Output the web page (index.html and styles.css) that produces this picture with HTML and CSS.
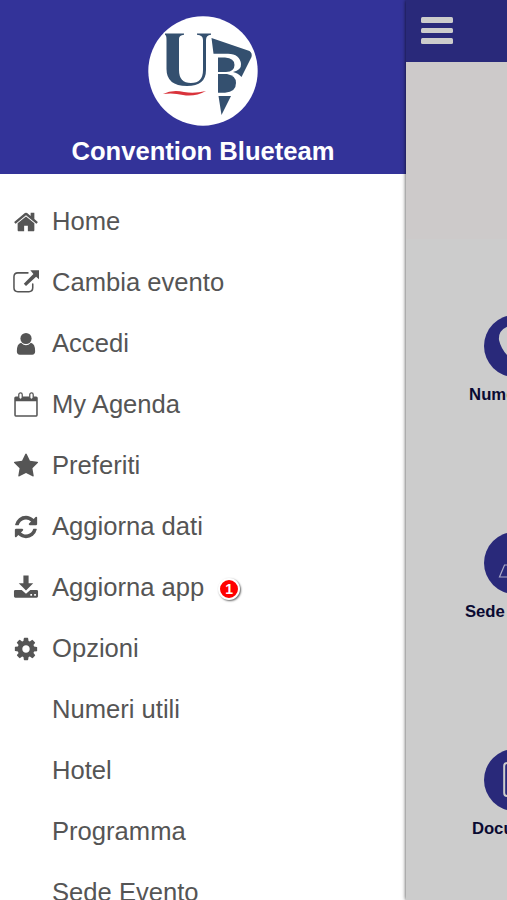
FILE: index.html
```html
<!DOCTYPE html>
<html lang="it">
<head>
    <meta charset="UTF-8">
    <meta name="viewport" content="width=device-width, initial-scale=1.0">
    <title>Convention Blueteam</title>
    <link rel="stylesheet" href="styles.css">
</head>
<body>
    <div class="app">
        <aside class="sidebar">
            <header class="sidebar-header">
                <svg class="logo" viewBox="0 0 110 110">
                    <circle cx="55" cy="55" r="54.7" fill="#fff"/>
                    <g fill="#34506f">
                        <path d="M17 17.500H36V18.700Q31 19 31 23V54Q31 67 43 67Q55 67 55 54V24Q55 19 49 18.700V17.500H63V18.700Q58 19 58 24V54Q58 70 39 70Q18.500 70 18.500 53V24Q18.500 19 17 18.700Z"/>
                        <path d="M63.500 22L101.500 35Q104.500 37 103.500 41L93.500 61Q90 57 85 56Q93.500 54 93 48Q92 38 80 37.700H65.500Z"/>
                        <path d="M70 41.500H77Q86.500 42 86.500 49Q86.500 55.500 78 56H70Z"/>
                        <path d="M70 58H79Q88 59.500 88 67Q88 76 77 76.700H70Z"/>
                        <path d="M70.500 80H83L73.500 99Z"/>
                    </g>
                    <path d="M15 78Q24 73.500 36 76Q46 78 58 75Q47 81 35 79Q25 76.500 15 78Z" fill="#d9333b"/>
                </svg>
                <h1>Convention Blueteam</h1>
            </header>
            <ul class="menu">
                <li>
                    <svg class="icon" viewBox="0 0 1792 1792"><path d="M1472 992v480q0 26-19 45t-45 19h-384v-384h-256v384h-384q-26 0-45-19t-19-45v-480q0-1 .5-3t.5-3l575-474 575 474q1 2 1 6zm223-69l-62 74q-8 9-21 11h-3q-13 0-21-7l-692-577-692 577q-12 8-24 7-13-2-21-11l-62-74q-8-10-7-23.500t11-21.500l719-599q32-26 76-26t76 26l244 204v-195q0-14 9-23t23-9h192q14 0 23 9t9 23v408l219 182q10 8 11 21.500t-7 23.500z"/></svg>
                    <span>Home</span>
                </li>
                <li>
                    <svg class="icon" viewBox="0 0 27 27"><path d="M15.500 3H5Q1 3 1 7V18.500Q1 22.500 5 22.500H16.500Q20.500 22.500 20.500 18.500V14.500" fill="none" stroke="#555" stroke-width="1.600" stroke-linecap="round"/><path d="M18 0.200H27V9.500L24 7L13.500 16.500L11.200 14.200L21.200 4.200Z"/></svg>
                    <span>Cambia evento</span>
                </li>
                <li>
                    <svg class="icon" viewBox="0 0 27 27"><circle cx="13.500" cy="7.800" r="5.800"/><path d="M8.400 12.200Q13.500 17.400 18.600 12.200Q23 13.200 23 21Q23 24.600 19.800 24.600H7.200Q4 24.600 4 21Q4 13.200 8.400 12.200Z"/></svg>
                    <span>Accedi</span>
                </li>
                <li>
                    <svg class="icon" viewBox="0 0 27 27"><path d="M2.900 4.600H24.100Q25.700 4.600 25.700 6.200V24Q25.700 25.700 24.100 25.700H2.900Q1.300 25.700 1.300 24V6.200Q1.300 4.600 2.900 4.600ZM2.900 9.500V24.200H24.100V9.500Z" fill-rule="evenodd"/><rect x="6" y="1" width="3.600" height="6.600" rx="1.800" fill="#fff" stroke="#555" stroke-width="1.300"/><rect x="17.400" y="1" width="3.600" height="6.600" rx="1.800" fill="#fff" stroke="#555" stroke-width="1.300"/></svg>
                    <span>My Agenda</span>
                </li>
                <li>
                    <svg class="icon" viewBox="0 0 1792 1792"><path d="M1728 647q0 22-26 48l-363 354 86 500q1 7 1 20 0 21-10.500 35.500t-30.500 14.500q-19 0-40-12l-449-236-449 236q-22 12-40 12-21 0-31.500-14.500t-10.500-35.500q0-6 2-20l86-500-364-354q-25-27-25-48 0-37 56-46l502-73 225-455q19-41 49-41t49 41l225 455 502 73q56 9 56 46z"/></svg>
                    <span>Preferiti</span>
                </li>
                <li>
                    <svg class="icon" viewBox="0 0 1792 1792"><path d="M1639 1056q0 5-1 7-64 268-268 434.500t-478 166.500q-146 0-282.500-55t-243.500-157l-129 129q-19 19-45 19t-45-19-19-45v-448q0-26 19-45t45-19h448q26 0 45 19t19 45-19 45l-137 137q71 66 161 102t187 36q134 0 250-65t186-179q11-17 53-117 8-23 30-23h192q13 0 22.500 9.500t9.500 22.500zm25-800v448q0 26-19 45t-45 19h-448q-26 0-45-19t-19-45 19-45l138-138q-148-137-349-137-134 0-250 65t-186 179q-11 17-53 117-8 23-30 23h-199q-13 0-22.500-9.500t-9.500-22.500v-7q65-268 270-434.500t480-166.500q146 0 284 55.500t245 156.500l130-129q19-19 45-19t45 19 19 45z"/></svg>
                    <span>Aggiorna dati</span>
                </li>
                <li>
                    <svg class="icon" viewBox="0 0 27 27"><path d="M10.800 0.500H16.200V8.500H21L13.500 16L6 8.500H10.800Z"/><path d="M2.500 15.500H9L13.500 19.500L18 15.500H24.500Q26 15.500 26 17V22Q26 23.500 24.500 23.500H2.500Q1 23.500 1 22V17Q1 15.500 2.500 15.500ZM18 19.800V21.500H19.800V19.800ZM22 19.800V21.500H23.800V19.800Z" fill-rule="evenodd"/></svg>
                    <span>Aggiorna app</span>
                    <span class="badge">1</span>
                </li>
                <li>
                    <svg class="icon" viewBox="0 0 1792 1792"><path d="M1152 896q0-106-75-181t-181-75-181 75-75 181 75 181 181 75 181-75 75-181zm512-109v222q0 12-8 23t-20 13l-185 28q-19 54-39 91 35 50 107 138 10 12 10 25t-9 23q-27 37-99 108t-94 71q-12 0-26-9l-138-108q-44 23-91 38-16 136-29 186-7 28-36 28h-222q-14 0-24.500-8.500t-11.500-21.500l-28-184q-49-16-90-37l-141 107q-10 9-25 9-14 0-25-11-126-114-165-168-7-10-7-23 0-12 8-23 15-21 51-66.500t54-70.500q-27-50-41-99l-183-27q-13-2-21-12.500t-8-23.500v-222q0-12 8-23t19-13l186-28q14-46 39-92-40-57-107-138-10-12-10-24 0-10 9-23 26-36 98.500-107.500t94.500-71.500q13 0 26 10l138 107q44-23 91-38 16-136 29-186 7-28 36-28h222q14 0 24.500 8.500t11.500 21.500l28 184q49 16 90 37l142-107q9-9 24-9 13 0 25 10 129 119 165 170 7 8 7 22 0 12-8 23-15 21-51 66.500t-54 70.500q26 50 41 98l183 28q13 2 21 12.500t8 23.500z"/></svg>
                    <span>Opzioni</span>
                </li>
                <li class="sub">Numeri utili</li>
                <li class="sub">Hotel</li>
                <li class="sub">Programma</li>
                <li class="sub">Sede Evento</li>
            </ul>
        </aside>
        <main class="page">
            <div class="topbar">
                <div class="hamburger">
                    <i></i>
                    <i></i>
                    <i></i>
                </div>
            </div>
            <div class="banner"></div>
            <div class="tiles">
                <div class="tile">
                    <svg class="tile-icon" viewBox="0 0 62 62"><circle cx="31" cy="31" r="31"/><path d="M25 11Q14 15 15 25Q18 38 31 47Q39 53 48 44L39 36L33 39Q26 34 24 27L30 22Z" fill="#ccc"/></svg>
                    <p>Numeri utili</p>
                </div>
                <div class="tile">
                    <svg class="tile-icon" viewBox="0 0 62 62"><circle cx="31" cy="31" r="31"/><path d="M24 33H20.500L15.500 45H46.500L41.500 33H38" fill="none" stroke="#aaaac8" stroke-width="1.200"/></svg>
                    <p>Sede Evento</p>
                </div>
                <div class="tile">
                    <svg class="tile-icon" viewBox="0 0 62 62"><circle cx="31" cy="31" r="31"/><rect x="20.200" y="14" width="24" height="33" rx="3" fill="none" stroke="#ccc" stroke-width="2"/></svg>
                    <p>Documenti</p>
                </div>
            </div>
        </main>
    </div>
</body>
</html>
```
FILE: styles.css
```css
* {
    margin: 0;
    padding: 0;
    box-sizing: border-box;
    font-family: "Liberation Sans", Arial, sans-serif;
}

body {
    background-color: #ccc;
    overflow: hidden;
}

.app {
    display: flex;
    height: 900px;
    overflow: hidden;
}

.sidebar {
    flex: 0 0 406px;
    background-color: #fff;
}

.sidebar-header {
    display: flex;
    flex-direction: column;
    align-items: center;
    height: 174px;
    padding-top: 16px;
    background-color: #333399;
    color: #fff;
}

.logo {
    width: 110px;
    height: 110px;
}

h1 {
    margin-top: 10px;
    font-size: 25.6px;
    line-height: 30px;
    white-space: nowrap;
}

.menu {
    padding-top: 17px;
    list-style: none;
}

.menu li {
    display: flex;
    align-items: center;
    height: 61px;
    padding-left: 13px;
    color: #555;
    font-size: 25.6px;
    white-space: nowrap;
}

.menu .sub {
    padding-left: 52px;
}

.icon {
    width: 26px;
    height: 26px;
    margin-right: 13px;
    fill: #555;
}

.badge {
    width: 22px;
    height: 22px;
    margin: 3px 0 0 14px;
    border: 2px solid #fff;
    border-radius: 50%;
    background-color: #f00;
    box-shadow: 1px 1px 2px rgba(0, 0, 0, 0.6);
    color: #fff;
    font-size: 14px;
    line-height: 18px;
    text-align: center;
    font-weight: bold;
}

/* page pushed to the right, casts its shadow on the menu */
.page {
    position: relative;
    flex: 1;
    min-width: 0;
    overflow: hidden;
    background-color: #ccc;
    box-shadow: 0 0 4px rgba(0, 0, 0, 0.8);
}

.topbar {
    height: 62px;
    padding: 17px 0 0 15px;
    background-color: #29297a;
}

.hamburger {
    display: flex;
    flex-direction: column;
    gap: 5px;
    width: 32px;
}

.hamburger i {
    height: 5.7px;
    border-radius: 1.5px;
    background-color: #ccc;
}

.banner {
    height: 177px;
    background-color: #cdcaca;
}

.tiles {
    width: 218px;
    padding-top: 76px;
}

.tile {
    display: flex;
    flex-direction: column;
    align-items: center;
    height: 217px;
}

.tile-icon {
    flex: none;
    width: 62px;
    height: 62px;
    fill: #29297a;
}

.tile p {
    margin-top: 8px;
    color: #0a0a32;
    font-size: 16.7px;
    font-weight: bold;
    line-height: 20px;
    white-space: nowrap;
}
```
